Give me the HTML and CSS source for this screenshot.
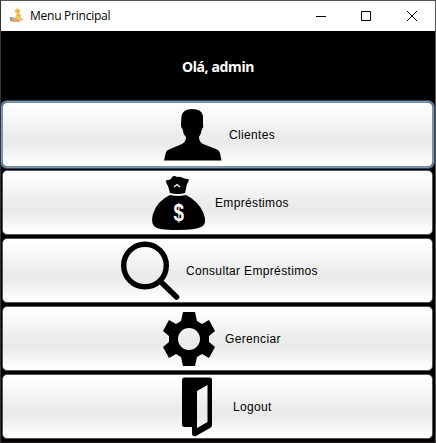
FILE: index.html
```
<!DOCTYPE html>
<html lang="pt">
<head>
<meta charset="utf-8">
<title>Menu Principal</title>
<link rel="stylesheet" href="styles.css">
</head>
<body>
<div class="window">
  <header class="titlebar">
    <svg class="app-icon" width="16" height="16" viewBox="0 0 16 16">
      <path d="M6 1.500Q8.500-.5 11 1.500V4l-1 1 2 2v4H6.500V8L8 6 6 4z" fill="#f1c84c"/>
      <path d="M8 3h2M8 7h2" stroke="#d99e2d" stroke-width="1"/>
      <path d="M3 9.500h3l2 1.500h2v1l4-2 .5 1-4.500 3H3z" fill="#dba780"/>
      <path d="M1 9h2v4H1z" fill="#8296a0"/>
    </svg>
    <span class="title">Menu Principal</span>
    <svg class="controls" width="102" height="12" viewBox="0 0 102 12" fill="none" stroke="#000">
      <path d="M0 6.500h10M45.500 1.500h9v9h-9zM91 1l10 10M101 1L91 11"/>
    </svg>
  </header>
  <div class="greeting">Olá, admin</div>
  <main class="menu">
    <button class="item item-clients">
      <svg width="58" height="52" viewBox="0 0 58 52"><path d="M0 51.500L2 43Q3 41 6 40L18 35Q22 33 22 28Q19 25 18.500 20Q16.500 18 17 15L17.500 7Q19 0 28 0Q38 0 39 7V15Q40 18 38 20Q37 25 35 28Q35 33 39 35L52 40Q55 41 56 44L57.500 51.500z"/></svg>
      <span>Clientes</span>
    </button>
    <button class="item item-loans">
      <svg width="54" height="54" viewBox="0 0 54 54">
        <path d="M18 17Q17 11 14 6Q13 4 16 4Q19 4 20 1Q22-1 25 1Q28 0 31 2Q33 3 36 3Q38 4 35 8L33 17Q26 19 18 17z"/>
        <path d="M18 19Q26 21 34 19Q46 25 51 36Q56 48 49 51Q43 54 27 54Q10 54 5 52Q-2 49 1 38Q5 25 18 19z"/>
        <path d="M22 11l3-2.500 3 2.500" fill="none" stroke="#fff" stroke-width="1.300"/>
        <text class="dollar" transform="translate(27 44.500) scale(.9 1.150)" text-anchor="middle">$</text>
      </svg>
      <span>Empréstimos</span>
    </button>
    <button class="item item-search">
      <svg width="60" height="60" viewBox="0 0 60 60" fill="none" stroke="#000" stroke-linecap="round"><circle cx="25" cy="24.500" r="21.300" stroke-width="5.400"/><path d="M41 41L56.500 56" stroke-width="5.500"/></svg>
      <span>Consultar Empréstimos</span>
    </button>
    <button class="item item-manage">
      <svg width="52" height="54" viewBox="0 0 52 54"><path fill-rule="evenodd" d="M20 0h12l2 9 5 3 7-4 6 11-6 5v6l6 5-6 11-7-4-5 3-2 9H20l-2-9-5-3-7 4L0 35l6-5v-6l-6-5L6 8l7 4 5-3zM26 16a11 11 0 1 0 0 22a11 11 0 1 0 0-22z"/></svg>
      <span>Gerenciar</span>
    </button>
    <button class="item item-logout">
      <svg width="32" height="60" viewBox="0 0 32 60"><path fill-rule="evenodd" d="M3.500 .5h25q2.500 0 2.500 2.500v45q0 2-2 3L15 59q-4 1-4-3v-6H3.500q-2.500 0-2.500-3V3Q1 .5 3.500 .5zM26.500 8L16 14v37l10.500-6z"/></svg>
      <span>Logout</span>
    </button>
  </main>
</div>
</body>
</html>
```
FILE: styles.css
```
body {
  margin: 0;
  background: #000;
}
.window {
  box-sizing: border-box;
  width: 436px;
  height: 443px;
  overflow: hidden;
  background: #000;
  border: 1px solid #555;
  border-left-color: #333;
  border-bottom-color: #24191b;
}
.titlebar {
  display: flex;
  align-items: center;
  height: 30px;
  padding: 0 17px 0 8px;
  background: #fff;
}
.title {
  margin-left: 5px;
  font: 12px/30px "Open Sans", "Noto Sans", sans-serif;
  letter-spacing: -.25px;
}
.controls {
  margin-left: auto;
}
.greeting {
  height: 69px;
  color: #fff;
  font: bold 14px/71px "Noto Sans", "Open Sans", sans-serif;
  letter-spacing: -.35px;
  text-align: center;
}
.menu {
  display: grid;
  grid-template-rows: repeat(5, 68px);
}
.item {
  display: flex;
  align-items: center;
  box-sizing: border-box;
  height: 65px;
  margin: 2px 2px 1px 1px;
  padding: 0;
  border: 1px solid #555;
  border-radius: 5px;
  background: linear-gradient(#fff 0, #f5f5f5 30%, #ececec 50%, #eaeaea 64%, #fff 97%);
  color: #000;
  font: 12px/16px "Liberation Sans", Arial, sans-serif;
  letter-spacing: .34px;
  white-space: nowrap;
}
.item svg {
  flex: none;
}
.item-clients {
  border-color: #7890a5;
  box-shadow: 0 0 0 1px #8299ad, 0 0 0 2px #34485c;
  padding-left: 161px;
  gap: 7px;
}
.item-loans {
  padding-left: 149px;
  gap: 9px;
}
.item-search {
  padding-left: 117px;
  gap: 6px;
}
.item-manage {
  padding-left: 160px;
  gap: 10px;
}
.item-logout {
  padding-left: 178px;
  gap: 20px;
}
.dollar {
  fill: #fff;
  font: bold 21px "Liberation Sans", Arial, sans-serif;
}
```
